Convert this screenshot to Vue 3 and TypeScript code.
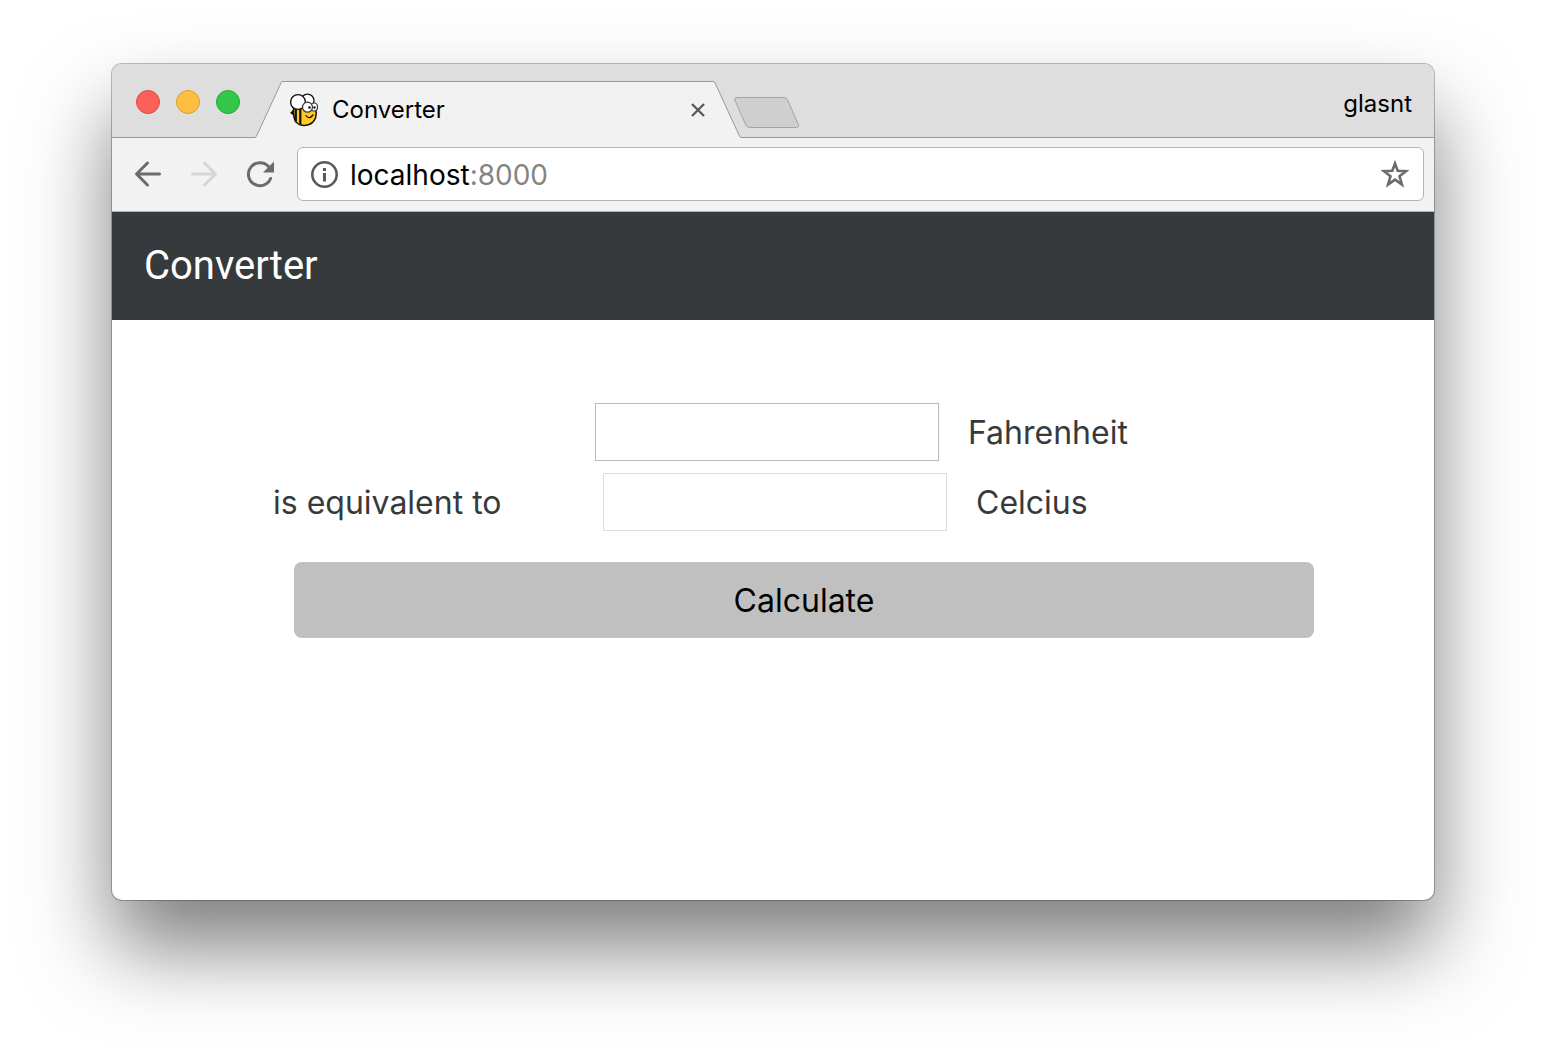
<script setup lang="ts">
import { ref } from 'vue'

const fahrenheit = ref('')
const celcius = ref('')

function calculate(): void {
  const value = parseFloat(fahrenheit.value)
  celcius.value = Number.isNaN(value) ? '' : String(((value - 32) * 5) / 9)
}
</script>

<template>
  <div class="desktop">
    <div class="window">
      <header class="titlebar">
        <div class="lights">
          <button class="light close" type="button" aria-label="Close window"></button>
          <button class="light minimise" type="button" aria-label="Minimise window"></button>
          <button class="light zoom" type="button" aria-label="Zoom window"></button>
        </div>
        <div class="tab">
          <svg class="slope" width="26" height="57" viewBox="0 0 26 57" aria-hidden="true">
            <path d="M-1 57 Q.3 56 1 54 L24.500 3 Q25.200 .5 27 .5 V57Z" fill="#f2f2f2" />
            <path d="M-1 56.500 Q.3 56 1 54 L24.500 3 Q25.200 .5 27 .5" fill="none" stroke="#999" />
          </svg>
          <div class="tab-body">
            <svg class="favicon" width="28" height="34" viewBox="0 0 28 34" aria-hidden="true">
              <path d="M4 16.500 L.6 20 L4.500 22.500Z" fill="#111" stroke="#111" />
              <path d="M3.500 15 Q3 25 6 29 Q10 33 16 32.300 Q23 31.500 25.500 25 Q27 20 25.500 15Z" fill="#ffc926" stroke="#111" stroke-width="1.500" />
              <path d="M5.800 15 V28.500 M10.300 15 V31.500" stroke="#111" stroke-width="2.200" />
              <ellipse cx="17.500" cy="7.800" rx="6.500" ry="6.700" fill="#fff" stroke="#111" stroke-width="1.300" />
              <circle cx="8" cy="9" r="7.400" fill="#fff" stroke="#111" stroke-width="1.300" />
              <ellipse cx="24" cy="14" rx="3.600" ry="4" fill="#fff" stroke="#333" stroke-width="1.200" />
              <ellipse cx="17.500" cy="14.200" rx="5" ry="5" fill="#fff" stroke="#333" stroke-width="1.200" />
              <circle cx="19.500" cy="14.500" r="1.300" fill="#111" />
              <circle cx="24.500" cy="14.500" r="1.200" fill="#111" />
              <path d="M16 22.500 Q19 27 23 22" fill="none" stroke="#111" stroke-width="1.300" stroke-linecap="round" />
            </svg>
            <span class="tab-title">Converter</span>
            <button class="tab-close" type="button" aria-label="Close tab">
              <svg width="16" height="16" viewBox="0 0 16 16"><path d="M2 2 L14 14 M14 2 L2 14" stroke="#5a5a5a" stroke-width="2.300" /></svg>
            </button>
          </div>
          <svg class="slope" width="26" height="57" viewBox="0 0 26 57" aria-hidden="true">
            <path d="M27 57 Q25.700 56 25 54 L1.500 3 Q.8 .5 -1 .5 V57Z" fill="#f2f2f2" />
            <path d="M27 56.500 Q25.700 56 25 54 L1.500 3 Q.8 .5 -1 .5" fill="none" stroke="#999" />
          </svg>
        </div>
        <button class="new-tab" type="button" aria-label="New tab">
          <svg width="66" height="34" viewBox="0 0 66 34">
            <path d="M3 1.500 H50 Q52.500 1.500 53.600 4 L64.200 28 Q65.500 31.500 62.500 31.500 H16 Q13 31.500 11.800 29 L.8 4 Q.2 1.500 3 1.500Z" fill="#cfcfcf" stroke="#a3a3a3" />
          </svg>
        </button>
        <span class="profile">glasnt</span>
      </header>

      <nav class="toolbar" aria-label="Browser">
        <button class="tool" type="button" aria-label="Back">
          <svg width="28" height="28" viewBox="0 0 28 28"><path d="M25.500 14 H3 M13.500 3 L2.500 14 L13.500 25" fill="none" stroke="#6b6b6b" stroke-width="3" stroke-linecap="round" stroke-linejoin="round" /></svg>
        </button>
        <button class="tool" type="button" aria-label="Forward" disabled>
          <svg width="28" height="28" viewBox="0 0 28 28"><path d="M2.500 14 H25 M14.500 3 L25.500 14 L14.500 25" fill="none" stroke="#d6d6d6" stroke-width="3" stroke-linecap="round" stroke-linejoin="round" /></svg>
        </button>
        <button class="tool" type="button" aria-label="Reload">
          <svg width="28" height="28" viewBox="0 0 28 28">
            <path d="M24.600 18.500 A11.500 11.500 0 1 1 22.500 6.500" fill="none" stroke="#6b6b6b" stroke-width="3" stroke-linecap="round" />
            <path d="M28 1.500 V12.500 H17Z" fill="#6b6b6b" />
          </svg>
        </button>
        <div class="address">
          <svg width="28" height="28" viewBox="0 0 28 28" aria-hidden="true">
            <circle cx="14.500" cy="14.500" r="12.200" fill="none" stroke="#5a5a5a" stroke-width="2.600" />
            <path d="M14.500 13 V21.500 M14.500 8 V11" stroke="#5a5a5a" stroke-width="3" />
          </svg>
          <span class="url">localhost<span class="port">:8000</span></span>
          <button class="tool" type="button" aria-label="Bookmark this page">
            <svg width="28" height="28" viewBox="0 0 28 28"><path d="M14 3.500 L16.700 10.800 L25 11.200 L18.500 16.200 L20.900 24.500 L14 19.700 L7.100 24.500 L9.500 16.200 L3 11.200 L11.300 10.800Z" fill="none" stroke="#6b6b6b" stroke-width="2.600" /></svg>
          </button>
        </div>
      </nav>

      <div class="app-bar"><h1>Converter</h1></div>

      <main class="content">
        <form @submit.prevent="calculate">
          <div class="row first">
            <input id="fahrenheit" v-model="fahrenheit" type="text" />
            <label for="fahrenheit">Fahrenheit</label>
          </div>
          <div class="row">
            <span class="lead">is equivalent to</span>
            <input id="celcius" v-model="celcius" class="result" type="text" readonly />
            <label for="celcius">Celcius</label>
          </div>
          <button class="calculate" type="submit">Calculate</button>
        </form>
      </main>
    </div>
  </div>
</template>

<style>
body {
  margin: 0;
  background: #fff;
}
</style>

<style scoped>
.desktop {
  box-sizing: border-box;
  min-height: 100vh;
  padding: 64px 112px 160px;
  display: flex;
  overflow: hidden;
  font-family: Inter, "Liberation Sans", sans-serif;
}
.window {
  flex: 1;
  min-width: 0;
  display: flex;
  flex-direction: column;
  border-radius: 10px;
  background: #fff;
  box-shadow: 0 0 0 1px rgba(0, 0, 0, 0.26), 0 48px 84px rgba(0, 0, 0, 0.51);
}
button {
  margin: 0;
  padding: 0;
  border: 0;
  background: none;
  font: inherit;
}
svg {
  display: block;
  flex: none;
}
.titlebar {
  box-sizing: border-box;
  height: 74px;
  display: flex;
  align-items: flex-end;
  padding: 0 22px 0 24px;
  border-bottom: 1px solid #999;
  border-radius: 10px 10px 0 0;
  background: #dedede;
}
.lights {
  display: flex;
  gap: 16px;
  margin: 0 16px 23px 0;
}
.light {
  width: 24px;
  height: 24px;
  border-radius: 50%;
}
.close {
  background: #fc605b;
  border: 1px solid #e2463f;
}
.minimise {
  background: #fdbe41;
  border: 1px solid #dfa023;
}
.zoom {
  background: #34c84a;
  border: 1px solid #1dad2b;
}
.tab {
  display: flex;
  flex: 0 1 484px;
  margin-bottom: -1px;
}
.slope {
  overflow: visible;
}
.tab-body {
  box-sizing: border-box;
  flex: 1;
  height: 57px;
  display: flex;
  align-items: center;
  padding: 0 8px;
  border-top: 1px solid #999;
  background: #f2f2f2;
}
.tab-title {
  flex: 1;
  margin-left: 14px;
  font-size: 24px;
  line-height: 32px;
}
.new-tab {
  margin: 0 auto 7px -6px;
}
.profile {
  font-size: 24px;
  line-height: 32px;
  margin-bottom: 17px;
}
.toolbar {
  display: flex;
  align-items: center;
  gap: 28px;
  padding: 9px 10px 10px 22px;
  border-bottom: 1px solid #b0b0b0;
  background: #f2f2f2;
}
.address {
  box-sizing: border-box;
  flex: 1;
  height: 54px;
  margin-left: -5px;
  display: flex;
  align-items: center;
  padding: 0 14px 0 12px;
  border: 1px solid #b4b4b4;
  border-radius: 6px;
  background: #fff;
}
.url {
  flex: 1;
  margin-left: 12px;
  padding-top: 2px;
  font-size: 28px;
  line-height: 36px;
}
.port {
  color: #848484;
}
.app-bar {
  padding: 30px 32px;
  background: #373a3c;
  color: #fff;
}
h1 {
  margin: 0;
  font-family: Roboto, "Liberation Sans", sans-serif;
  font-size: 40px;
  line-height: 48px;
  font-weight: 400;
}
.content {
  padding: 83px 120px 32px 161px;
  color: #373a3c;
  font-size: 32px;
  line-height: 40px;
}
.row {
  display: flex;
  align-items: center;
  margin-bottom: 12px;
}
.first {
  padding-left: 322px;
}
.lead,
.row label {
  padding-top: 2px;
}
.lead {
  width: 330px;
}
.row input {
  box-sizing: border-box;
  width: 344px;
  height: 58px;
  margin: 0 29px 0 0;
  padding: 0 12px;
  border: 1px solid #bbb;
  background: #fff;
  color: inherit;
  font: inherit;
}
.row .result {
  border-color: #ddd;
}
.calculate {
  display: block;
  width: calc(100% - 21px);
  height: 76px;
  margin: 31px 0 0 21px;
  padding-top: 2px;
  border-radius: 8px;
  background: #c0c0c0;
  color: #000;
}
</style>
